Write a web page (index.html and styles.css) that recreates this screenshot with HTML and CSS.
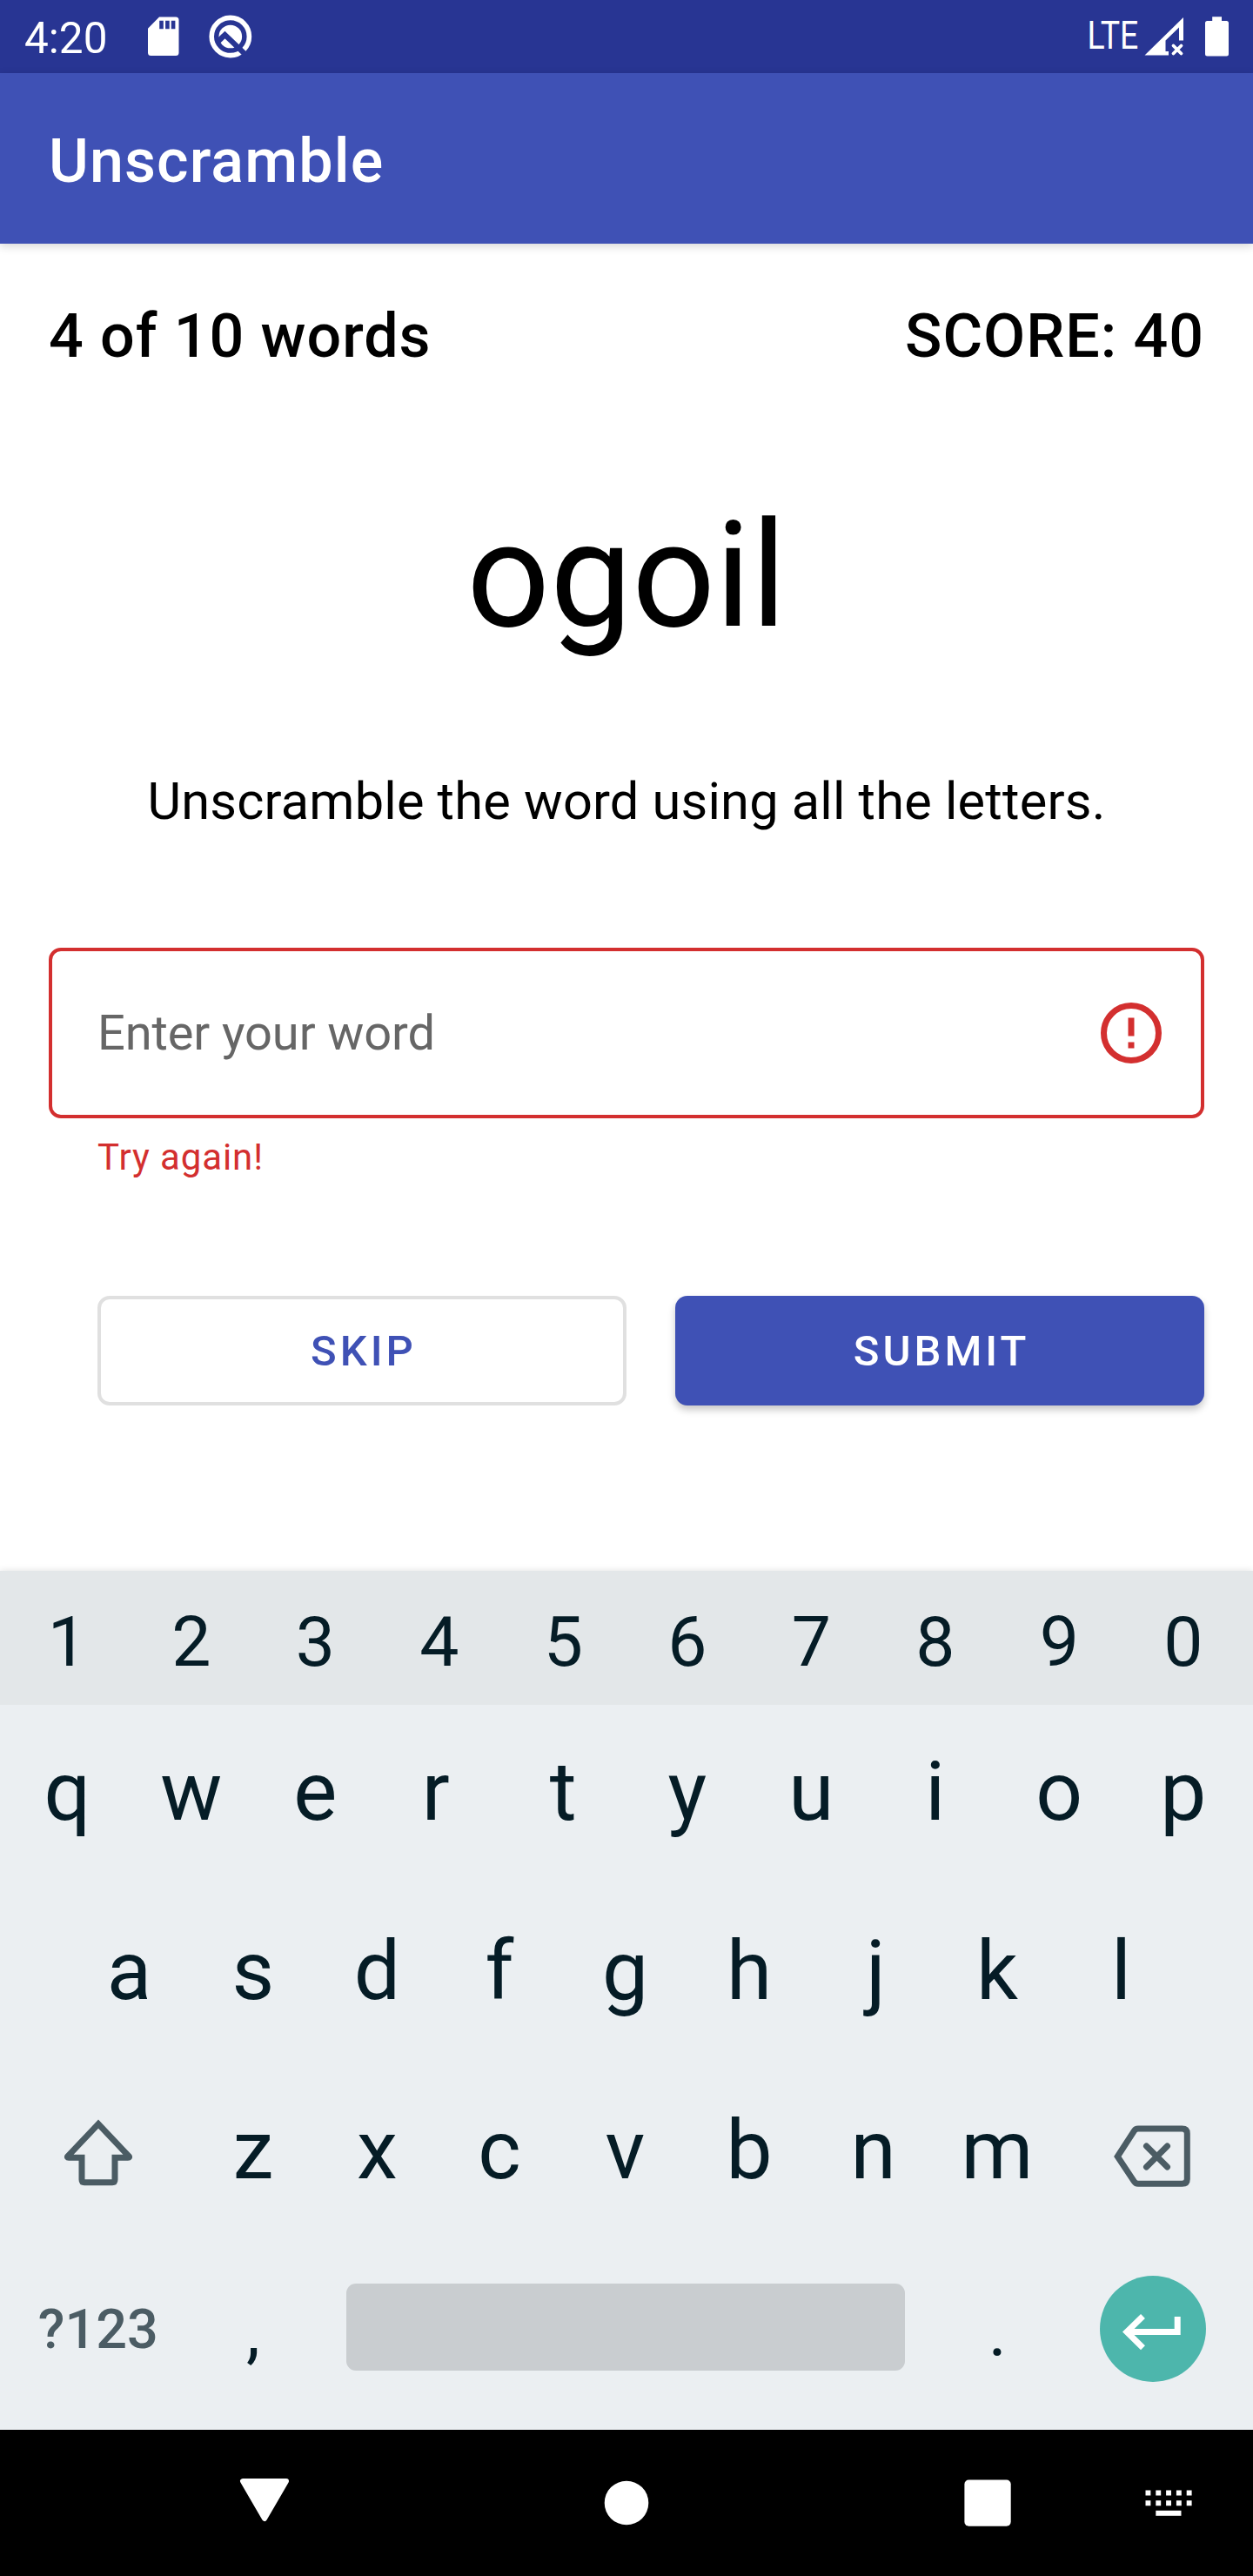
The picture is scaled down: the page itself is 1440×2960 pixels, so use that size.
FILE: index.html
```html
<!DOCTYPE html>
<html lang="en">
<head>
<meta charset="utf-8">
<title>Unscramble</title>
<link rel="stylesheet" href="styles.css">
</head>
<body>
<div class="statusbar">
  <span class="clock">4:20</span>
  <svg class="sdcard" width="36" height="46" viewBox="169.5 19.5 36 46"><path fill="#fff" fill-rule="evenodd" d="M182.5 20H201.500Q205 20 205 23.500V61Q205 64.500 201.500 64.500H173Q169.500 64.500 169.500 61V33.300ZM182.700 24.300V33.800H187.300V24.300ZM189.600 24.300V33.800H194.200V24.300ZM196.300 24.300V33.800H200.900V24.300Z"/></svg>
  <svg class="qicon" width="50" height="50" viewBox="239.500 17 50 50"><circle cx="264.300" cy="42" r="21.600" fill="none" stroke="#fff" stroke-width="5.600"/><circle cx="264.300" cy="42" r="13.300" fill="#fff"/><path d="M249 48.800L258 40L283.500 64.500" fill="none" stroke="#283593" stroke-width="6.200"/></svg>
  <span class="network">LTE</span>
  <svg class="signal" width="46" height="46" viewBox="1315 19 46 46"><path fill="#fff" d="M1315.500 63.500L1360 20V46.500H1355V31.500L1339.500 46.500V59H1343V63.500Z"/><path d="M1348.500 52.500L1357.500 61.500M1357.500 52.500L1348.500 61.500" stroke="#fff" stroke-width="3.800" stroke-linecap="round"/></svg>
  <svg class="battery" width="28" height="46" viewBox="1385 19 28 46"><path fill="#fff" d="M1393.200 19.200H1404V24H1409.500Q1412 24 1412 26.500V62Q1412 64.500 1409.500 64.500H1387.500Q1385 64.500 1385 62V26.500Q1385 24 1387.500 24H1393.200Z"/></svg>
</div>
<header class="appbar">Unscramble</header>
<main class="game">
  <div class="progress"><span>4 of 10 words</span><span>SCORE: 40</span></div>
  <div class="scrambled">ogoil</div>
  <p class="hint">Unscramble the word using all the letters.</p>
  <div class="field">
    <span>Enter your word</span>
    <svg width="84" height="84" viewBox="0 0 24 24"><circle cx="12" cy="12" r="9" fill="none" stroke="#d32f2f" stroke-width="2"/><path fill="#d32f2f" d="M11 7h2v6h-2zM11 15h2v2h-2z"/></svg>
  </div>
  <p class="error">Try again!</p>
  <div class="actions"><button class="btn outlined">SKIP</button><button class="btn filled">SUBMIT</button></div>
</main>
<section class="keyboard">
  <div class="row numbers"><b>1</b><b>2</b><b>3</b><b>4</b><b>5</b><b>6</b><b>7</b><b>8</b><b>9</b><b>0</b></div>
  <div class="row letters"><b>q</b><b>w</b><b>e</b><b class="key-r">r</b><b>t</b><b>y</b><b>u</b><b>i</b><b>o</b><b>p</b></div>
  <div class="row letters"><b>a</b><b>s</b><b>d</b><b class="key-f">f</b><b>g</b><b>h</b><b class="key-j">j</b><b>k</b><b>l</b></div>
  <div class="row letters">
    <div class="wide"><svg width="84" height="84" viewBox="71 2432 84 84"><path d="M113 2440.700L78 2477.500Q76.500 2479.300 79 2479.300H94V2504.500Q94 2507.700 97 2507.700H129Q132 2507.700 132 2504.500V2479.300H147Q149.500 2479.300 148 2477.500Z" fill="none" stroke="#4b5c64" stroke-width="7"/></svg></div>
    <b>z</b><b>x</b><b class="key-c">c</b><b>v</b><b>b</b><b>n</b><b>m</b>
    <div class="wide"><svg class="backspace" width="92" height="76" viewBox="1278 2440 92 76"><path d="M1284.300 2478L1303.500 2448.500Q1305 2446 1308 2446H1358.500Q1364.300 2446 1364.300 2451.500V2504Q1364.300 2509.300 1358.500 2509.300H1308Q1305 2509.300 1303.500 2506.800Z" fill="none" stroke="#4b5c64" stroke-width="7"/><path d="M1317.500 2466L1341.500 2490M1341.500 2466L1317.500 2490" stroke="#4b5c64" stroke-width="7" stroke-linecap="round"/></svg></div>
  </div>
  <div class="row bottom">
    <div class="wide symbols">?123</div>
    <b>,</b>
    <div class="space"></div>
    <b class="period">.</b>
    <div class="enter"><svg width="74" height="48" viewBox="1287 2657 74 48"><path d="M1353.200 2663V2680.500H1296M1313.500 2662.500L1295 2680.500L1313.500 2698.700" fill="none" stroke="#fff" stroke-width="7"/></svg></div>
  </div>
</section>
<nav class="navbar">
  <svg width="58" height="54" viewBox="275 2846 58 54"><path d="M279 2851H329L304 2894Z" fill="#fff" stroke="#fff" stroke-width="6" stroke-linejoin="round"/></svg>
  <svg class="home" width="52" height="54" viewBox="694 2849 52 54"><circle cx="720" cy="2876" r="25.300" fill="#fff"/></svg>
  <svg class="recent" width="54" height="54" viewBox="1108 2849 54 54"><rect x="1108.400" y="2849.500" width="53.300" height="53.300" rx="5" fill="#fff"/></svg>
  <svg class="ime" width="54" height="54" viewBox="1316 2849 54 54"><path d="M1316.500 2864.500H1370M1316.500 2876.200H1370" stroke="#fff" stroke-width="6" stroke-dasharray="5.900 5.900"/><path d="M1328.300 2887.800H1357.500" stroke="#fff" stroke-width="6"/></svg>
</nav>
</body>
</html>
```

FILE: styles.css
```css
* { box-sizing: border-box; }
body { margin: 0; width: 1440px; height: 2960px; display: flex; flex-direction: column; background: #fff; color: #000; font-family: Roboto, sans-serif; overflow: hidden; }
p { margin: 0; }
svg { display: block; flex: none; }
.statusbar { height: 84px; flex: none; display: flex; align-items: center; padding: 0 27px 0 28px; background: #283593; color: #fff; }
.clock { width: 141.5px; font-size: 49.5px; line-height: 60px; padding-top: 4px; white-space: nowrap; }
.qicon { margin-left: 34px; }
.network { margin-left: auto; font-size: 43.5px; line-height: 50px; margin-right: 7px; transform: scaleX(.86); transform-origin: right; }
.battery { margin-left: 24px; }
.appbar { height: 196px; flex: none; position: relative; padding: 6px 56px 0; background: #3f51b5; color: #fff; font-size: 70px; line-height: 190px; font-weight: 500; letter-spacing: 1.1px; box-shadow: 0 3px 10px rgba(0, 0, 0, .16); }
.game { height: 1525px; flex: none; padding: 65px 56px 0; }
.progress { display: flex; justify-content: space-between; height: 82px; line-height: 82px; font-size: 70px; font-weight: 500; letter-spacing: 0.95px; }
.scrambled { margin-top: 136px; height: 197px; line-height: 197px; font-size: 168px; text-align: center; }
.hint { margin-top: 126px; height: 70px; line-height: 70px; font-size: 59.5px; letter-spacing: 0.2px; text-align: center; }
.field { margin-top: 133px; height: 196px; padding: 0 38px 0 52px; border: 4px solid #d32f2f; border-radius: 14px; display: flex; align-items: center; justify-content: space-between; color: #666; font-size: 56px; letter-spacing: -0.1px; }
.error { margin: 21px 0 0 56px; height: 48px; line-height: 48px; font-size: 42px; letter-spacing: 0.9px; color: #d32f2f; }
.actions { margin: 135px 0 0 56px; display: flex; gap: 56px; }
.btn { width: 608px; flex: none; height: 126px; padding: 2px 0 0 4px; border: 0; border-radius: 14px; font: 500 49px/124px Roboto, sans-serif; letter-spacing: 4px; }
.outlined { border: 4px solid #e0e0e0; background: #fff; color: #3f51b5; line-height: 116px; }
.filled { background: #3f51b5; color: #fff; box-shadow: 0 5px 8px rgba(0, 0, 0, .22); }
.keyboard { height: 987px; flex: none; background: #ebeff2; color: #051c26; box-shadow: 0 0 8px rgba(0, 0, 0, .12); }
.row { display: flex; justify-content: center; padding: 0 9px 0 6px; }
.row b { width: 142.5px; text-align: center; font-weight: 400; }
.row .key-r { padding-right: 8px; }
.row .key-f, .row .key-c { padding-right: 4px; }
.row .key-j { padding-left: 6px; }
.numbers { height: 154px; background: #e3e7e9; font-size: 80.5px; line-height: 163px; }
.letters { height: 206px; font-size: 94.5px; line-height: 200px; }
.wide { width: 213.75px; display: flex; align-items: center; justify-content: center; line-height: 1; }
.wide .backspace { margin-top: 8px; }
.bottom { height: 215px; align-items: flex-start; font-size: 80.5px; line-height: 206px; }
.symbols { font-size: 63px; font-weight: 500; line-height: 199px; color: #4b5c64; }
.space { width: 642px; height: 100px; margin: 47px 35.5px 0 35.75px; border-radius: 11px; background: #c9cdd0; }
.enter { width: 122px; height: 122px; margin: 38px 45px 0 46.5px; border-radius: 50%; background: #4db6ac; display: flex; align-items: center; justify-content: center; }
.enter svg { margin: 8px 3px 0 0; }
.navbar { height: 168px; flex: none; position: relative; display: flex; align-items: center; padding-left: 275px; background: #000; }
.navbar svg:first-child { margin-top: -6px; }
.home { margin-left: 361px; }
.recent { margin-left: 362px; }
.ime { margin-left: 154px; }
```
